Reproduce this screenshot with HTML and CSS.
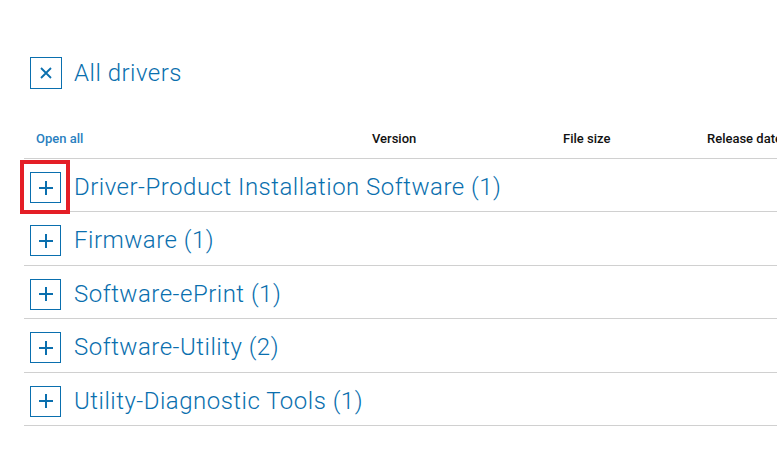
FILE: index.html
```html
<!DOCTYPE html>
<html lang="en">
<head>
<meta charset="utf-8">
<title>All drivers</title>
<link rel="stylesheet" href="styles.css">
</head>
<body>
<div class="page">
  <div class="title-row">
    <span class="icon-box close-box">
      <svg width="14" height="14" viewBox="0 0 14 14"><path d="M2 2 L12 12 M12 2 L2 12" stroke="#0a6fae" stroke-width="1.8" fill="none"/></svg>
    </span>
    <h1 class="title">All drivers</h1>
  </div>
  <div class="table">
    <div class="head">
      <span class="open-all">Open all</span>
      <span class="col">Version</span>
      <span class="col">File size</span>
      <span class="col">Release date</span>
    </div>
    <div class="row">
      <span class="icon-box plus-box highlighted">
        <svg width="16" height="16" viewBox="0 0 16 16"><path d="M8 1 V15 M1 8 H15" stroke="#0a6fae" stroke-width="2" fill="none"/></svg>
      </span>
      <span class="label">Driver-Product Installation Software (1)</span>
    </div>
    <div class="row">
      <span class="icon-box plus-box">
        <svg width="16" height="16" viewBox="0 0 16 16"><path d="M8 1 V15 M1 8 H15" stroke="#0a6fae" stroke-width="2" fill="none"/></svg>
      </span>
      <span class="label">Firmware (1)</span>
    </div>
    <div class="row">
      <span class="icon-box plus-box">
        <svg width="16" height="16" viewBox="0 0 16 16"><path d="M8 1 V15 M1 8 H15" stroke="#0a6fae" stroke-width="2" fill="none"/></svg>
      </span>
      <span class="label">Software-ePrint (1)</span>
    </div>
    <div class="row">
      <span class="icon-box plus-box">
        <svg width="16" height="16" viewBox="0 0 16 16"><path d="M8 1 V15 M1 8 H15" stroke="#0a6fae" stroke-width="2" fill="none"/></svg>
      </span>
      <span class="label">Software-Utility (2)</span>
    </div>
    <div class="row">
      <span class="icon-box plus-box">
        <svg width="16" height="16" viewBox="0 0 16 16"><path d="M8 1 V15 M1 8 H15" stroke="#0a6fae" stroke-width="2" fill="none"/></svg>
      </span>
      <span class="label">Utility-Diagnostic Tools (1)</span>
    </div>
  </div>
</div>
</body>
</html>
```
FILE: styles.css
```css
html, body {
  margin: 0;
  padding: 0;
  background: #fff;
  overflow: hidden;
}
body {
  font-family: Roboto, "Liberation Sans", sans-serif;
  color: #0a6fae;
  width: 777px;
  height: 454px;
}
.page {
  padding: 57px 0 0 24px;
  width: 900px;
}
.title-row {
  display: flex;
  align-items: center;
  gap: 12px;
  padding-left: 6px;
  height: 32px;
}
.icon-box {
  box-sizing: border-box;
  display: flex;
  align-items: center;
  justify-content: center;
  border: 1.5px solid #0a6fae;
  flex: none;
}
.close-box {
  width: 32px;
  height: 32px;
}
.title {
  margin: 0;
  font-weight: 300;
  font-size: 24px;
  line-height: 32px;
  letter-spacing: 0.5px;
  color: #0a6fae;
}
.table {
  margin-top: 36px;
}
.head {
  box-sizing: border-box;
  display: grid;
  grid-template-columns: 348px 191px 144px 200px;
  align-items: center;
  height: 34px;
  padding-bottom: 7px;
  font-size: 13px;
  font-weight: 500;
  border-bottom: 1px solid #d0d0d0;
}
.open-all {
  padding-left: 12px;
  color: #2a7fbf;
}
.col {
  color: #111;
}
.row {
  box-sizing: border-box;
  display: flex;
  align-items: flex-start;
  gap: 13px;
  height: 53.4px;
  padding: 13px 0 0 6px;
  border-bottom: 1px solid #d0d0d0;
}
.plus-box {
  position: relative;
  width: 31px;
  height: 31px;
}
.highlighted::after {
  content: "";
  position: absolute;
  left: -11px;
  top: -13px;
  width: 42px;
  height: 46px;
  border: 4px solid #e41e26;
}
.label {
  font-size: 24px;
  font-weight: 300;
  line-height: 31px;
  letter-spacing: 0.5px;
  color: #0a6fae;
}
```
